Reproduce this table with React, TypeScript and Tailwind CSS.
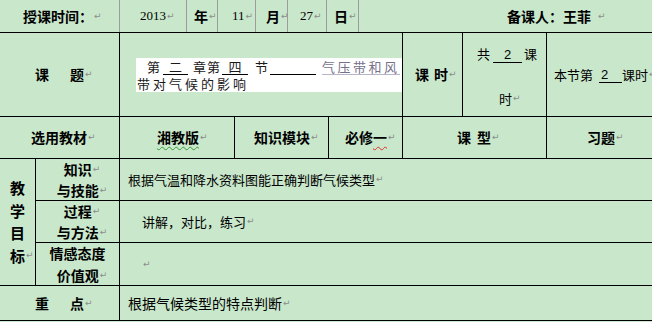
import React from "react";

// Word paragraph mark shown after each cell's text
const Mark = () => (
  <span className="shrink-0 font-['DejaVu_Sans'] font-normal text-[9px] text-[#8c8c8c] ml-[1px] leading-none">↵</span>
);

const grid = "border-black";

export default function App() {
  return (
    <div className="w-[652px] h-[322px] overflow-hidden bg-[#c9e7cb] text-black font-['Noto_Sans_CJK_SC',sans-serif] whitespace-nowrap">
      {/* date row */}
      <div className="flex h-[33px] border-b border-black text-[14px]">
        <div className="w-[120px] border-r border-[#9c9c9c] flex items-center pl-[23px] font-bold">
          授课时间：<Mark />
        </div>
        <div className="w-[67px] border-r border-[#9c9c9c] flex items-center pl-[20px] font-['Liberation_Serif'] text-[13px]">
          2013<Mark />
        </div>
        <div className="w-[31px] border-r border-[#9c9c9c] flex items-center pl-[7px] font-bold">
          年<Mark />
        </div>
        <div className="w-[38px] border-r border-[#9c9c9c] flex items-center pl-[14px] font-['Liberation_Serif'] text-[13px]">
          11<Mark />
        </div>
        <div className="w-[32px] border-r border-[#9c9c9c] flex items-center pl-[10px] font-bold">
          月<Mark />
        </div>
        <div className="w-[39px] border-r border-[#9c9c9c] flex items-center pl-[12px] font-['Liberation_Serif'] text-[13px]">
          27<Mark />
        </div>
        <div className="w-[32px] border-r border-[#9c9c9c] flex items-center pl-[7px] font-bold">
          日<Mark />
        </div>
        <div className="flex-1 flex items-center pl-[148px] font-bold">
          备课人：王菲<span className="w-[6px]" /><Mark />
        </div>
      </div>

      {/* lesson title row */}
      <div className={`flex h-[84px] border-b ${grid}`}>
        <div className={`w-[120px] border-r ${grid} flex items-center pl-[35px] text-[14px] font-bold`}>
          <span>课</span>
          <span className="ml-[21px]">题</span>
          <Mark />
        </div>
        <div className={`w-[283px] border-r ${grid} flex items-center pl-[16px]`}>
          <div className="w-full h-[34px] bg-white flex flex-col overflow-hidden text-[13px] leading-[17px] text-[#1a1a1a]">
            <div className="flex items-end h-[17px] shrink-0">
              <span className="shrink-0 ml-[11px]">第</span>
              <span className="shrink-0 ml-[3px] w-[25px] border-b border-black text-center leading-[15px]">二</span>
              <span className="shrink-0 ml-[5px]">章</span>
              <span className="shrink-0 ml-[1px]">第</span>
              <span className="shrink-0 ml-[2px] w-[26px] border-b border-black text-center leading-[15px]">四</span>
              <span className="shrink-0 ml-[7px]">节</span>
              <span className="shrink-0 ml-[2px] w-[46px] h-[15px] border-b border-black" />
              <span className="shrink-0 ml-[6px] tracking-[2.5px] text-[#77718a] border-b border-[#b9b4c8] leading-[15px]">气压带和风</span>
            </div>
            <div className="pl-[1px] tracking-[3px]">带对气候的影响</div>
          </div>
        </div>
        <div className={`w-[60px] border-r ${grid} flex items-center pl-[12px] text-[14px] font-bold`}>
          <span>课</span>
          <span className="ml-[5px]">时</span>
          <Mark />
        </div>
        <div className={`w-[84px] border-r ${grid} flex flex-col text-[13px] pt-[14px]`}>
          <div className="flex items-end pl-[14px] h-[16px]">
            <span>共</span>
            <span className="ml-[3px] w-[29px] border-b border-black text-center font-['Liberation_Sans'] leading-[15px]">2</span>
            <span className="ml-[2px]">课</span>
          </div>
          <div className="pl-[36px] mt-[26px] flex items-center">
            时<Mark />
          </div>
        </div>
        <div className="flex-1 flex items-center pl-[7px] text-[13px] overflow-hidden">
          <span className="shrink-0">本节第</span>
          <span className="shrink-0 ml-[6px] w-[23px] border-b border-black font-['Liberation_Sans'] leading-[15px] pl-[2px]">2</span>
          <span className="shrink-0">课时</span>
          <Mark />
        </div>
      </div>

      {/* textbook row */}
      <div className={`flex h-[42px] border-b ${grid} text-[14px] font-bold`}>
        <div className={`w-[120px] border-r ${grid} flex items-center pl-[31px]`}>
          选用教材<Mark />
        </div>
        <div className={`w-[115px] border-r ${grid} flex items-center pl-[37px]`}>
          <span className="underline decoration-wavy decoration-[#3a9a3a] decoration-1 underline-offset-[3px]">湘教版</span>
          <Mark />
        </div>
        <div className={`w-[94px] border-r ${grid} flex items-center pl-[19px]`}>
          知识模块<Mark />
        </div>
        <div className={`w-[74px] border-r ${grid} flex items-center pl-[16px]`}>
          <span>必修</span>
          <span className="underline decoration-wavy decoration-[#e03030] decoration-1 underline-offset-[3px]">一</span>
          <Mark />
        </div>
        <div className={`w-[144px] border-r ${grid} flex items-center pl-[54px]`}>
          <span>课</span>
          <span className="ml-[6px]">型</span>
          <Mark />
        </div>
        <div className="flex-1 flex items-center pl-[40px]">
          习题<Mark />
        </div>
      </div>

      {/* teaching goals */}
      <div className={`flex h-[127px] border-b ${grid}`}>
        <div className={`w-[36px] border-r ${grid} flex flex-col justify-center pl-[10px] text-[15px] leading-[22.5px] font-bold`}>
          <span>教</span>
          <span>学</span>
          <span>目</span>
          <span className="flex items-center">标<Mark /></span>
        </div>
        <div className="flex-1 flex flex-col">
          <div className={`flex h-[42px] border-b ${grid}`}>
            <div className={`w-[84px] border-r ${grid} flex flex-col items-center justify-center text-[14px] leading-[21px] font-bold`}>
              <span className="pl-[9px] flex items-center">知识<Mark /></span>
              <span className="pl-[9px] flex items-center">与技能<Mark /></span>
            </div>
            <div className="flex-1 flex items-center pl-[8px] text-[13px]">
              根据气温和降水资料图能正确判断气候类型<Mark />
            </div>
          </div>
          <div className={`flex h-[42px] border-b ${grid}`}>
            <div className={`w-[84px] border-r ${grid} flex flex-col items-center justify-center text-[14px] leading-[21px] font-bold`}>
              <span className="pl-[9px] flex items-center">过程<Mark /></span>
              <span className="pl-[9px] flex items-center">与方法<Mark /></span>
            </div>
            <div className="flex-1 flex items-center pl-[22px] text-[13px]">
              讲解，对比，练习<Mark />
            </div>
          </div>
          <div className="flex h-[42px]">
            <div className={`w-[84px] border-r ${grid} flex flex-col items-center justify-center text-[14px] leading-[22px] font-bold`}>
              <span>情感态度</span>
              <span className="pl-[9px] flex items-center">价值观<Mark /></span>
            </div>
            <div className="flex-1 flex items-center pl-[22px] text-[13px]">
              <Mark />
            </div>
          </div>
        </div>
      </div>

      {/* key point */}
      <div className={`flex h-[35px] border-b ${grid}`}>
        <div className={`w-[120px] border-r ${grid} flex items-center pl-[35px] text-[14px] font-bold`}>
          <span>重</span>
          <span className="ml-[21px]">点</span>
          <Mark />
        </div>
        <div className="flex-1 flex items-center pl-[8px] text-[14px]">
          根据气候类型的特点判断<Mark />
        </div>
      </div>
    </div>
  );
}
